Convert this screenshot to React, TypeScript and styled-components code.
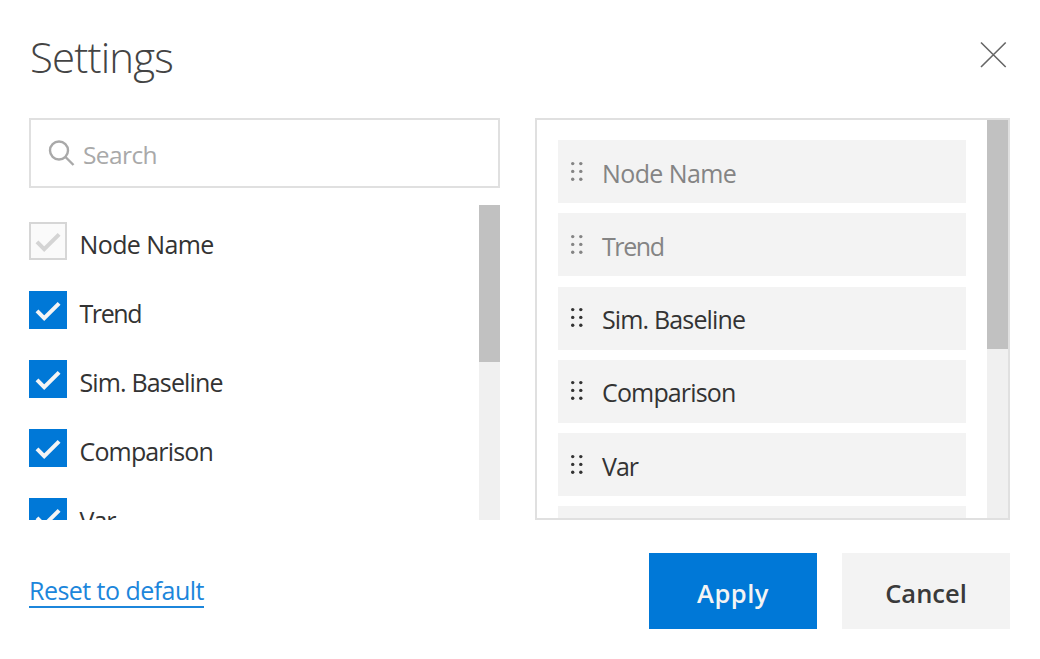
import React from "react";
import styled, { createGlobalStyle } from "styled-components";

const GlobalStyle = createGlobalStyle`
  *, *::before, *::after { box-sizing: border-box; }
  body {
    margin: 0;
    background: #fff;
    color: #333;
    font-family: "Segoe UI", "Open Sans", "Noto Sans", sans-serif;
    font-size: 25px;
  }
  button { font: inherit; border: 0; padding: 0; cursor: pointer; }
`;

const Dialog = styled.main`
  display: flex;
  flex-direction: column;
  width: 1040px;
  height: 659px;
  padding: 0 30px 30px 29px;
  overflow: hidden;
`;

const Header = styled.header`
  display: flex;
  justify-content: space-between;
  align-items: flex-start;
  height: 118px;
`;

const Title = styled.h1`
  margin: 28px 0 0 1px;
  color: #444;
  font-size: 42px;
  font-weight: 300;
  line-height: 58px;
  letter-spacing: -0.85px;
`;

const CloseButton = styled.button`
  display: flex;
  margin: 41px 3px 0 0;
  background: none;
`;

const Columns = styled.div`
  display: flex;
  justify-content: space-between;
  height: 402px;
`;

const Picker = styled.section`
  display: flex;
  flex-direction: column;
  width: 471px;
`;

const SearchBox = styled.label`
  display: flex;
  flex: none;
  align-items: center;
  height: 70px;
  padding: 0 17px;
  border: 2px solid #e0e0e0;
  color: #a9a9a9;
`;

const SearchInput = styled.input`
  flex: 1;
  min-width: 0;
  height: 40px;
  margin: 2px 0 0 7px;
  padding: 0;
  border: 0;
  outline: 0;
  background: none;
  font: inherit;
  font-size: 24.5px;
  letter-spacing: -0.6px;
  &::placeholder { color: #a9a9a9; opacity: 1; }
`;

const ScrollArea = styled.div`
  display: flex;
  justify-content: space-between;
  flex: 1;
  min-height: 0;
  margin-top: 17px;
  overflow: hidden;
`;

const Options = styled.div`
  display: flex;
  flex-direction: column;
  gap: 31.1px;
  padding-top: 17px;
`;

const Option = styled.label`
  display: flex;
  flex: none;
  align-items: center;
  gap: 12.5px;
  height: 38px;
`;

const CheckBox = styled.span<{ $locked?: boolean }>`
  display: flex;
  width: 38px;
  height: 38px;
  border: 2px solid ${(p) => (p.$locked ? "#d6d6d6" : "#0078d7")};
  background: ${(p) => (p.$locked ? "#fafafa" : "#0078d7")};
  color: ${(p) => (p.$locked ? "#d4d4d4" : "#f4f4f4")};
`;

const Label = styled.span<{ $track: number; $drop: number }>`
  padding-top: ${(p) => p.$drop}px;
  line-height: 34px;
  white-space: nowrap;
  letter-spacing: ${(p) => p.$track}px;
`;

const Track = styled.div`
  flex: none;
  width: 21.5px;
  background: #f0f0f0;
`;

const Thumb = styled.div<{ $length: number }>`
  height: ${(p) => p.$length}px;
  background: #c1c1c1;
`;

const OrderPanel = styled.section`
  display: flex;
  justify-content: space-between;
  width: 475px;
  border: 2px solid #e0e0e0;
  overflow: hidden;
`;

const OrderList = styled.div`
  display: flex;
  flex-direction: column;
  gap: 10.3px;
  width: 408px;
  margin-left: 21px;
  padding-top: 20px;
`;

const OrderItem = styled.div<{ $locked?: boolean }>`
  display: flex;
  flex: none;
  align-items: center;
  height: 63px;
  padding-left: 12px;
  background: #f3f3f3;
  color: ${(p) => (p.$locked ? "#848484" : "#333")};
`;

const Grip = styled.svg`
  flex: none;
  margin-right: 18px;
`;

const Footer = styled.footer`
  display: flex;
  align-items: center;
  margin-top: 33px;
  height: 76px;
`;

const ResetLink = styled.button`
  margin-right: auto;
  height: 34px;
  border-bottom: 2px solid #1c86db;
  background: none;
  color: #1c86db;
  line-height: 32px;
  letter-spacing: -0.54px;
`;

const ActionButton = styled.button<{ $primary?: boolean }>`
  width: 168px;
  height: 76px;
  margin-left: 25px;
  padding-top: 3px;
  background: ${(p) => (p.$primary ? "#0078d7" : "#f3f3f3")};
  color: ${(p) => (p.$primary ? "#f4f4f4" : "#3a3a3a")};
  font-size: 25.5px;
  font-weight: 600;
  letter-spacing: ${(p) => (p.$primary ? 0.5 : 0)}px;
`;

const columns = [
  { name: "Node Name", locked: true, track: -0.6 },
  { name: "Trend", orderLocked: true, track: -1.4 },
  { name: "Sim. Baseline", track: -0.85 },
  { name: "Comparison", track: -0.85 },
  { name: "Var", track: -1 },
];

function GripDots() {
  return (
    <Grip width="14" height="22" viewBox="0 0 14 22" fill="currentColor">
      {[2.6, 10.4, 18.2].map((y) =>
        [2.7, 10.8].map((x) => <circle key={`${x}-${y}`} cx={x} cy={y} r="1.7" />)
      )}
    </Grip>
  );
}

export default function App() {
  return (
    <>
      <GlobalStyle />
      <Dialog>
        <Header>
          <Title>Settings</Title>
          <CloseButton aria-label="Close">
            <svg width="27" height="27" viewBox="0 0 27 27" stroke="#666" strokeWidth="1.6">
              <path d="M1 1.5 25.7 26M25.7 1.5 1 26" />
            </svg>
          </CloseButton>
        </Header>
        <Columns>
          <Picker>
            <SearchBox>
              <svg width="28" height="28" viewBox="0 0 28 28" fill="none" stroke="currentColor" strokeWidth="2.4">
                <circle cx="11" cy="11.5" r="9" />
                <path d="M17.5 18 25.5 26" />
              </svg>
              <SearchInput placeholder="Search" />
            </SearchBox>
            <ScrollArea>
              <Options>
                {columns.map((c) => (
                  <Option key={c.name}>
                    <CheckBox $locked={c.locked}>
                      <svg width="34" height="34" viewBox="0 0 34 34" fill="none" stroke="currentColor" strokeWidth="4">
                        <path d="M6 17.9 13.2 25.2 28.1 10.3" />
                      </svg>
                    </CheckBox>
                    <Label $track={c.track} $drop={5.5}>{c.name}</Label>
                  </Option>
                ))}
              </Options>
              <Track>
                <Thumb $length={157} />
              </Track>
            </ScrollArea>
          </Picker>
          <OrderPanel>
            <OrderList>
              {columns.map((c) => (
                <OrderItem key={c.name} $locked={c.locked || c.orderLocked}>
                  <GripDots />
                  <Label $track={c.track} $drop={2}>{c.name}</Label>
                </OrderItem>
              ))}
              <OrderItem />
            </OrderList>
            <Track>
              <Thumb $length={229} />
            </Track>
          </OrderPanel>
        </Columns>
        <Footer>
          <ResetLink>Reset to default</ResetLink>
          <ActionButton $primary>Apply</ActionButton>
          <ActionButton>Cancel</ActionButton>
        </Footer>
      </Dialog>
    </>
  );
}
